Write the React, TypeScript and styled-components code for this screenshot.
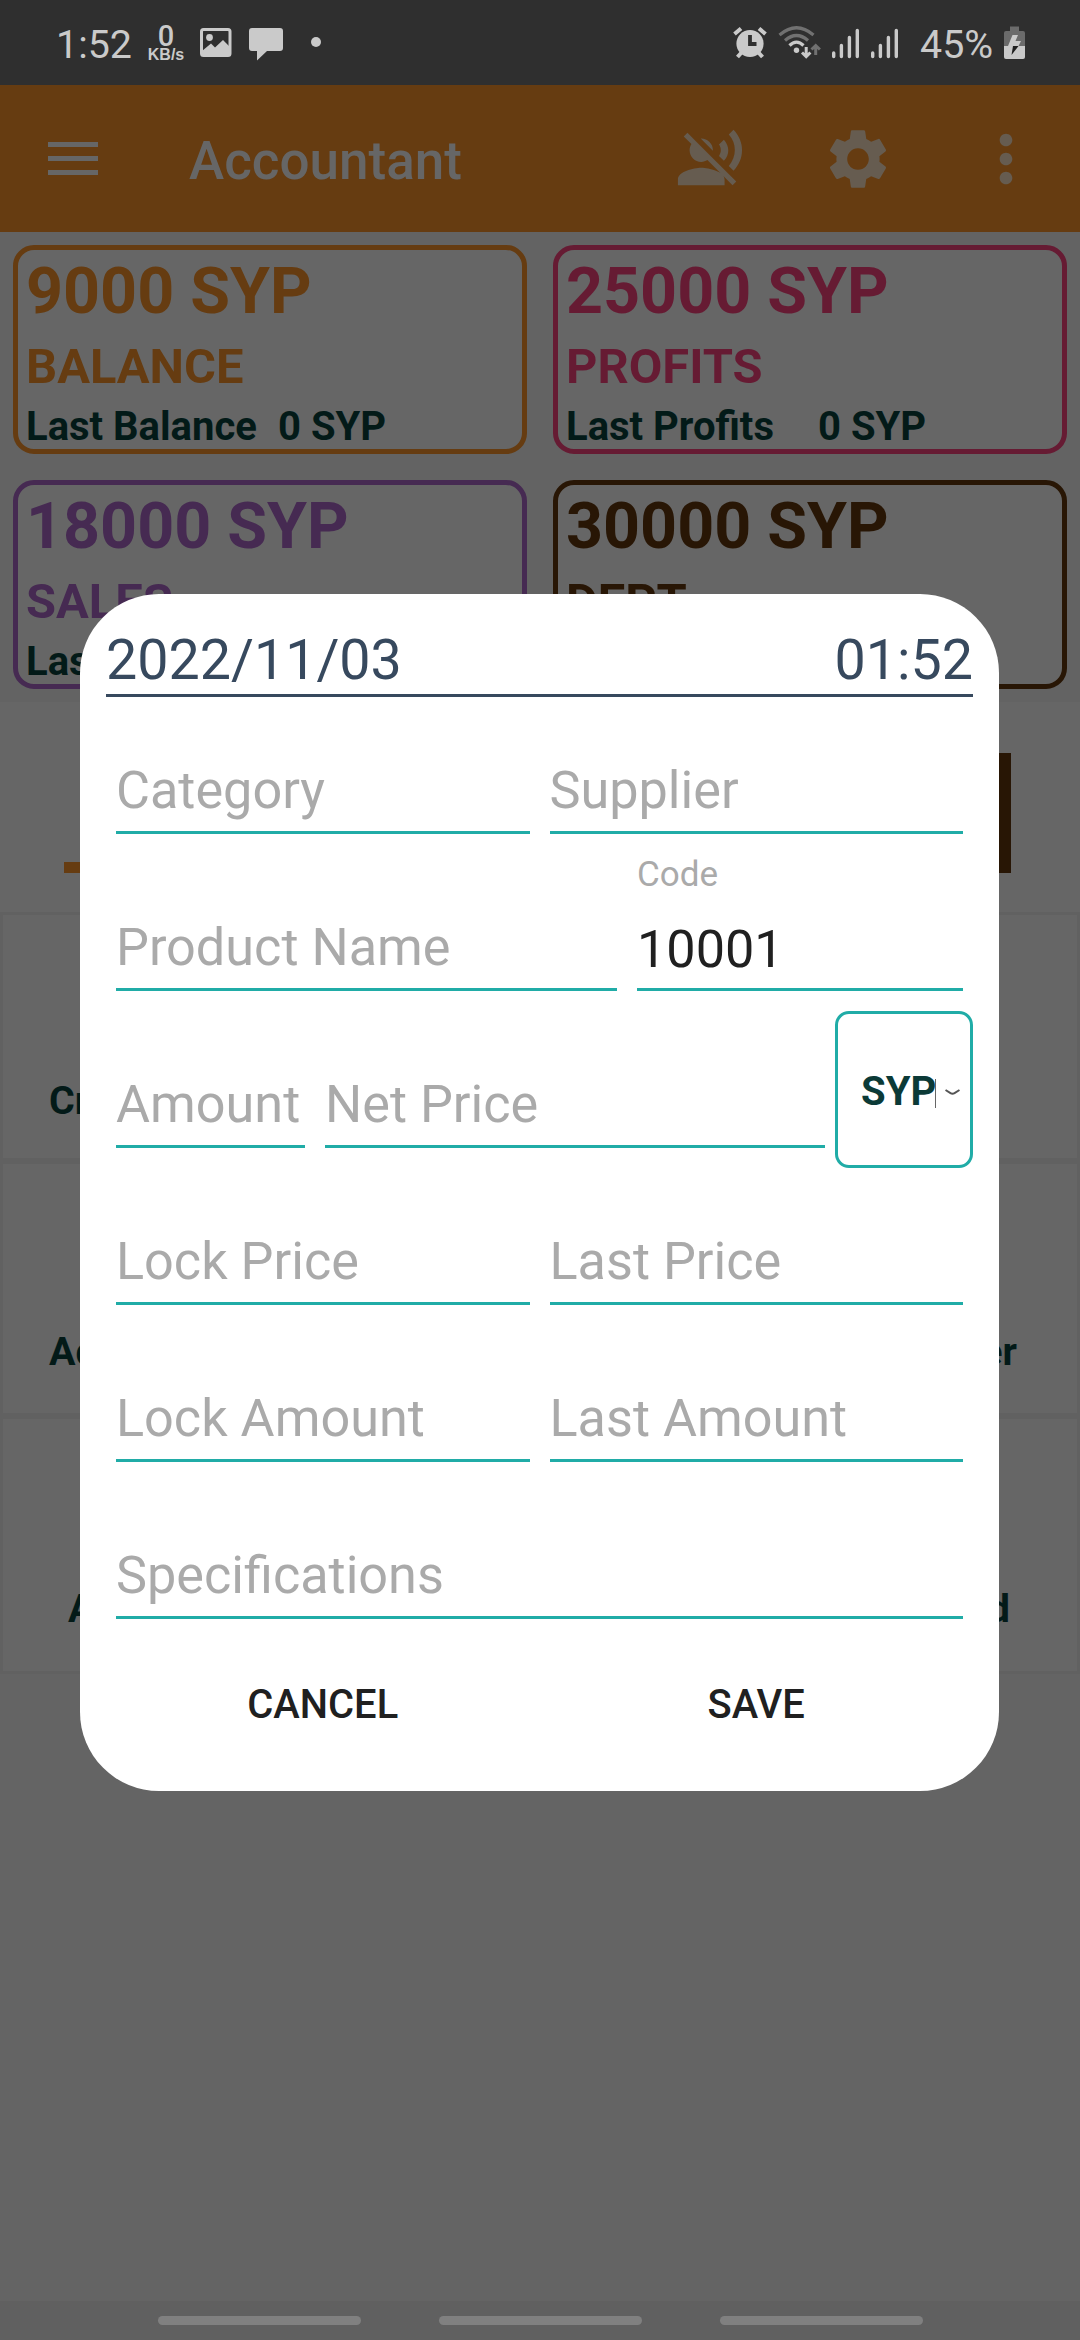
import React from "react";
import styled, { createGlobalStyle } from "styled-components";
import { MdMoreVert, MdSettings, MdVoiceOverOff } from "react-icons/md";

const GlobalStyle = createGlobalStyle`
  * { box-sizing: border-box; }
  body { margin: 0; background: #646464; font-family: Roboto, "Noto Sans", sans-serif; }
`;

const ORANGE = "#663c11";
const PINK = "#661b33";
const PURPLE = "#462a52";
const BROWN = "#281605";
const TEAL = "#20aca7";

const Screen = styled.div`
  position: relative;
  display: flex;
  flex-direction: column;
  width: 1080px;
  height: 2340px;
  overflow: hidden;
  background: #646464;
`;

const StatusBar = styled.header`
  display: flex;
  align-items: flex-start;
  justify-content: space-between;
  height: 85px;
  padding: 21px 55px 0 56px;
  background: #2f2f2f;
  color: #cacaca;
`;

const StatusGroup = styled.div`
  display: flex;
  align-items: flex-start;
`;

const StatusText = styled.span<{ $width: number }>`
  width: ${(p) => p.$width}px;
  font-size: 39.4px;
  line-height: 47px;
  white-space: nowrap;
`;

const Speed = styled.div`
  display: flex;
  flex-direction: column;
  align-items: center;
  width: 40px;
  margin-left: 12px;
  padding-top: 1px;
  font-weight: 500;
`;

const SpeedValue = styled.span`
  font-size: 29px;
  line-height: 28px;
`;

const SpeedUnit = styled.span`
  margin-top: -2px;
  font-family: "Liberation Sans", Roboto, sans-serif;
  font-size: 16px;
  font-weight: 700;
  line-height: 14px;
`;

const Glyph = styled.svg<{ $gap?: number }>`
  flex: none;
  display: block;
  margin-left: ${(p) => p.$gap ?? 0}px;
`;

const AppBar = styled.div`
  display: flex;
  align-items: center;
  height: 147px;
  padding: 0 36px 0 48px;
  background: ${ORANGE};
  color: #665c50;
`;

const MenuIcon = styled.div`
  display: flex;
  flex-direction: column;
  gap: 9px;
  width: 50px;
`;

const MenuLine = styled.span`
  height: 5px;
  background: #666666;
`;

const AppTitle = styled.h1`
  flex: 1;
  margin: 0;
  padding: 5px 0 0 91px;
  color: #666666;
  font-size: 53px;
  font-weight: 500;
  line-height: 62px;
`;

const Actions = styled.div`
  display: flex;
  align-items: center;
`;

const Action = styled.button<{ $size: number; $left: number }>`
  display: flex;
  padding: 0;
  border: 0;
  background: none;
  color: inherit;
  font-size: ${(p) => p.$size}px;
  margin-left: ${(p) => p.$left}px;
`;

const Summary = styled.section`
  display: grid;
  grid-template-columns: 514px 514px;
  gap: 26px;
  height: 470px;
  padding: 13px;
  background: #636363;
`;

const Card = styled.article<{ $color: string }>`
  display: flex;
  flex-direction: column;
  height: 209px;
  padding: 4px 8px 0;
  border: 5px solid ${(p) => p.$color};
  border-radius: 21px;
  background: #666666;
  color: ${(p) => p.$color};
  font-weight: 700;
  white-space: nowrap;
`;

const CardAmount = styled.strong`
  font-size: 64.6px;
  font-weight: 700;
  line-height: 74px;
`;

const CardName = styled.span`
  margin-top: 11px;
  font-size: 48.8px;
  line-height: 56px;
`;

const CardLast = styled.div`
  display: grid;
  grid-template-columns: 252px 1fr;
  margin-top: 9px;
  color: #031a18;
  font-size: 40px;
  line-height: 46px;
`;

const Chart = styled.section`
  display: flex;
  align-items: flex-end;
  justify-content: space-between;
  height: 210px;
  padding: 0 69px 39px 64px;
  background: #666666;
`;

const Bar = styled.div<{ $height: number; $color: string }>`
  width: 110px;
  height: ${(p) => p.$height}px;
  background: ${(p) => p.$color};
`;

const Tiles = styled.section`
  display: flex;
  flex-direction: column;
`;

const Tile = styled.div<{ $height: number; $left: number; $right: number; $bottom: number }>`
  display: flex;
  align-items: flex-end;
  justify-content: space-between;
  height: ${(p) => p.$height}px;
  padding: 0 ${(p) => p.$right}px ${(p) => p.$bottom}px ${(p) => p.$left}px;
  border: 3px solid #616161;
  background: #666666;
  color: #031a18;
  font-size: 39.4px;
  font-weight: 700;
  line-height: 46px;
`;

const NavBar = styled.nav`
  display: flex;
  justify-content: center;
  gap: 78px;
  height: 39px;
  margin-top: auto;
  padding-top: 15px;
  background: #606060;
`;

const NavPill = styled.span`
  width: 203px;
  height: 9px;
  border-radius: 4.5px;
  background: #808080;
`;

const Dialog = styled.form`
  position: absolute;
  top: 594px;
  left: 80px;
  display: flex;
  flex-direction: column;
  width: 919px;
  height: 1197px;
  padding: 0 26px;
  border-radius: 79px;
  background: #ffffff;
`;

const DialogHeader = styled.div`
  display: flex;
  justify-content: space-between;
  height: 103px;
  padding-top: 34px;
  border-bottom: 3px solid #37495e;
  color: #37495e;
  font-size: 55.6px;
  line-height: 64px;
`;

const FieldRow = styled.div<{ $height?: number }>`
  display: flex;
  align-items: flex-end;
  gap: 20px;
  height: ${(p) => p.$height ?? 157}px;
  padding: 0 10px;
`;

const Field = styled.label<{ $width?: number }>`
  display: flex;
  flex-direction: column;
  flex: ${(p) => (p.$width ? `0 0 ${p.$width}px` : "1 1 0")};
  border-bottom: 3px solid ${TEAL};
  white-space: nowrap;
`;

const Hint = styled.span`
  padding-bottom: 9px;
  color: #aaaaaa;
  font-size: 52.2px;
  line-height: 62px;
`;

const FloatingHint = styled.span`
  margin-bottom: 24px;
  color: #aaaaaa;
  font-size: 35px;
  line-height: 40px;
`;

const Value = styled.span`
  padding-bottom: 7px;
  color: #202020;
  font-size: 52.2px;
  line-height: 62px;
`;

const PriceRow = styled.div`
  display: flex;
  align-items: flex-end;
  gap: 10px;
  height: 157px;
`;

const PriceFields = styled(FieldRow)`
  flex: 1;
  padding-right: 0;
`;

const Currency = styled.div`
  display: flex;
  align-items: center;
  width: 138px;
  height: 157px;
  margin-bottom: -20px;
  padding: 4px 0 0 23px;
  border: 3px solid ${TEAL};
  border-radius: 14px;
  color: #0b3a37;
  font-size: 40px;
  font-weight: 700;
  line-height: 46px;
`;

const Caret = styled.span`
  width: 1px;
  height: 29px;
  margin: 4px 0 0 -1px;
  background: #666666;
`;

const Buttons = styled.div`
  display: flex;
`;

const DialogButton = styled.button`
  flex: 1;
  padding: 63px 0 0;
  border: 0;
  background: none;
  color: #202020;
  font-family: inherit;
  font-size: 39.9px;
  font-weight: 500;
  line-height: 46px;
`;

const cards = [
  { amount: "9000 SYP", name: "BALANCE", last: "Last Balance", color: ORANGE },
  { amount: "25000 SYP", name: "PROFITS", last: "Last Profits", color: PINK },
  { amount: "18000 SYP", name: "SALES", last: "Las", color: PURPLE },
  { amount: "30000 SYP", name: "DEPT", last: "", color: BROWN },
];

const tiles = [
  { start: "Cr", end: "", height: 249, left: 46, right: 60, bottom: 34 },
  { start: "Ad", end: "er", height: 255, left: 46, right: 60, bottom: 38 },
  { start: "A", end: "d", height: 258, left: 65, right: 67, bottom: 39 },
];

const ImageIcon = () => (
  <Glyph $gap={14} width="32" height="40" viewBox="0 0 32 40">
    <rect x="1.5" y="8.5" width="28.5" height="26" rx="2" fill="none" stroke="#cacaca" strokeWidth="3" />
    <circle cx="9.5" cy="16.5" r="3.4" fill="#cacaca" />
    <path d="M2 30 11 22.5 15 26.5 23 19 30 26V35H2Z" fill="#cacaca" />
  </Glyph>
);

const ChatIcon = () => (
  <Glyph $gap={17} width="35" height="40" viewBox="0 0 35 40">
    <path d="M3 7H31Q34 7 34 10V27Q34 30 31 30H18L8 39.5V30H3Q0 30 0 27V10Q0 7 3 7Z" fill="#cacaca" />
  </Glyph>
);

const DotIcon = () => (
  <Glyph $gap={27} width="10" height="40" viewBox="0 0 10 40">
    <circle cx="5" cy="21" r="5" fill="#cacaca" />
  </Glyph>
);

const AlarmIcon = () => (
  <Glyph width="34" height="40" viewBox="0 0 34 40">
    <circle cx="17" cy="22.5" r="13.6" fill="#cacaca" />
    <g stroke="#cacaca" strokeWidth="4" fill="none">
      <path d="M1.5 13 8 7.5M32.5 13 26 7.5" />
      <path d="M4.5 36 9 31M29.5 36 25 31" />
    </g>
    <path d="M17 14V23H23.5" fill="none" stroke="#2f2f2f" strokeWidth="3.8" />
  </Glyph>
);

const WifiIcon = () => (
  <Glyph $gap={11} width="43" height="40" viewBox="0 0 43 40">
    <g fill="none" strokeWidth="3.2">
      <path d="M1.500 14Q18.500 -0.500 35.500 14" stroke="#717171" />
      <path d="M7 19.500Q18.500 9.500 30 19.500" stroke="#717171" />
      <path d="M11.500 24.500Q18.500 17.500 25.500 24.500" stroke="#cacaca" />
      <path d="M28.200 26V36M24 31.500 28.200 35.600 32.400 31.500" stroke="#cacaca" strokeWidth="3" />
      <path d="M37.700 34V25M33.500 28.500 37.700 24.500 41.900 28.500" stroke="#717171" strokeWidth="3" />
    </g>
    <circle cx="18.500" cy="29.200" r="2.700" fill="#cacaca" />
  </Glyph>
);

const SignalIcon = ({ gap }: { gap: number }) => (
  <Glyph $gap={gap} width="28" height="40" viewBox="0 0 28 40">
    <path d="M1.7 32V35.500M9.4 24.500V35.500M17.4 16.500V35.500M25.3 9.500V35.500" stroke="#cacaca" strokeWidth="3.4" strokeLinecap="round" />
  </Glyph>
);

const BatteryIcon = () => (
  <Glyph width="21" height="40" viewBox="0 0 21 40">
    <path d="M6 5.500H15V10H19Q21 10 21 12V25H0V12Q0 10 2 10H6Z" fill="#6b6b6b" />
    <path d="M0 25H21V36Q21 38 19 38H2Q0 38 0 36Z" fill="#cacaca" />
    <path d="M8.500 14H14L11.500 20H17L14.500 25H4Z" fill="#cacaca" />
    <path d="M9 25H14.500L7.500 34Z" fill="#202020" />
  </Glyph>
);

export default function App() {
  return (
    <>
      <GlobalStyle />
      <Screen>
        <StatusBar>
          <StatusGroup>
            <StatusText $width={78}>1:52</StatusText>
            <Speed>
              <SpeedValue>0</SpeedValue>
              <SpeedUnit>KB/s</SpeedUnit>
            </Speed>
            <ImageIcon />
            <ChatIcon />
            <DotIcon />
          </StatusGroup>
          <StatusGroup>
            <AlarmIcon />
            <WifiIcon />
            <SignalIcon gap={11} />
            <SignalIcon gap={11} />
            <Glyph width="21" height="1" />
            <StatusText $width={84}>45%</StatusText>
            <BatteryIcon />
          </StatusGroup>
        </StatusBar>

        <AppBar>
          <MenuIcon>
            <MenuLine />
            <MenuLine />
            <MenuLine />
          </MenuIcon>
          <AppTitle>Accountant</AppTitle>
          <Actions>
            <Action $size={70} $left={0}>
              <MdVoiceOverOff />
            </Action>
            <Action $size={72} $left={77}>
              <MdSettings />
            </Action>
            <Action $size={76} $left={74}>
              <MdMoreVert />
            </Action>
          </Actions>
        </AppBar>

        <Summary>
          {cards.map((card) => (
            <Card key={card.name} $color={card.color}>
              <CardAmount>{card.amount}</CardAmount>
              <CardName>{card.name}</CardName>
              <CardLast>
                <span>{card.last}</span>
                {card.last.length > 3 && <span>0 SYP</span>}
              </CardLast>
            </Card>
          ))}
        </Summary>

        <Chart>
          <Bar $height={11} $color={ORANGE} />
          <Bar $height={120} $color={BROWN} />
        </Chart>

        <Tiles>
          {tiles.map((tile) => (
            <Tile
              key={tile.height}
              $height={tile.height}
              $left={tile.left}
              $right={tile.right}
              $bottom={tile.bottom}
            >
              <span>{tile.start}</span>
              <span>{tile.end}</span>
            </Tile>
          ))}
        </Tiles>

        <NavBar>
          <NavPill />
          <NavPill />
          <NavPill />
        </NavBar>

        <Dialog>
          <DialogHeader>
            <span>2022/11/03</span>
            <span>01:52</span>
          </DialogHeader>
          <FieldRow $height={137}>
            <Field>
              <Hint>Category</Hint>
            </Field>
            <Field>
              <Hint>Supplier</Hint>
            </Field>
          </FieldRow>
          <FieldRow>
            <Field $width={501}>
              <Hint>Product Name</Hint>
            </Field>
            <Field>
              <FloatingHint>Code</FloatingHint>
              <Value>10001</Value>
            </Field>
          </FieldRow>
          <PriceRow>
            <PriceFields>
              <Field $width={189}>
                <Hint>Amount</Hint>
              </Field>
              <Field>
                <Hint>Net Price</Hint>
              </Field>
            </PriceFields>
            <Currency>
              <span>SYP</span>
              <Caret />
              <Glyph $gap={9} width="15" height="12" viewBox="0 0 15 12">
                <path d="M0.500 4 5.500 7.200Q7.500 8.400 9.500 7.200L14.500 4" fill="none" stroke="#555555" strokeWidth="2" />
              </Glyph>
            </Currency>
          </PriceRow>
          <FieldRow>
            <Field>
              <Hint>Lock Price</Hint>
            </Field>
            <Field>
              <Hint>Last Price</Hint>
            </Field>
          </FieldRow>
          <FieldRow>
            <Field>
              <Hint>Lock Amount</Hint>
            </Field>
            <Field>
              <Hint>Last Amount</Hint>
            </Field>
          </FieldRow>
          <FieldRow>
            <Field>
              <Hint>Specifications</Hint>
            </Field>
          </FieldRow>
          <Buttons>
            <DialogButton type="button">CANCEL</DialogButton>
            <DialogButton type="button">SAVE</DialogButton>
          </Buttons>
        </Dialog>
      </Screen>
    </>
  );
}
